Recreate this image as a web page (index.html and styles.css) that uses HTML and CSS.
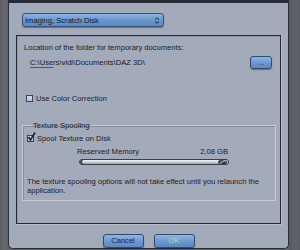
FILE: index.html
```html
<!DOCTYPE html>
<html lang="en">
<head>
  <meta charset="UTF-8" />
  <title>Preferences</title>
  <link rel="stylesheet" href="styles.css">
</head>
<body>
  <div class="screen">
    <div class="side side-left"></div>

    <div class="dialog">
      <div class="select">
        <span>Imaging, Scratch Disk</span>
        <svg class="chev" width="6" height="7" viewBox="0 0 6 7">
          <path d="M1 2.5 L3 0.8 L5 2.5 M1 4.5 L3 6.2 L5 4.5" fill="none" stroke="#1d2a44" stroke-width="1"/>
        </svg>
      </div>

      <div class="frame">
        <p class="label">Location of the folder for temporary documents:</p>
        <div class="path-row">
          <span class="path"><span class="typo">C:\Use</span>rs\vidi\Documents\DAZ 3D\</span>
          <button class="btn btn-small">...</button>
        </div>

        <label class="check-row check-top"><span class="box"></span>Use Color Correction</label>

        <fieldset class="group">
          <legend>Texture Spooling</legend>
          <label class="check-row"><span class="box">
            <svg width="9" height="10" viewBox="0 0 9 10">
              <path d="M1.5 5 L3.5 8 L8 0.5" fill="none" stroke="#18233d" stroke-width="1.6"/>
            </svg>
          </span>Spool Texture on Disk</label>

          <div class="memory">
            <div class="memory-labels">
              <span>Reserved Memory</span>
              <span>2,08 GB</span>
            </div>
            <div class="slider">
              <span class="knob">
                <svg width="8" height="4" viewBox="0 0 8 4">
                  <path d="M1 3.5 L5 0.8 L7 0.8" fill="none" stroke="#b9d3f0" stroke-width="1"/>
                </svg>
              </span>
            </div>
          </div>

          <p class="note">The texture spooling options will not take effect until you relaunch the application.</p>
        </fieldset>
      </div>

      <div class="actions">
        <button class="btn">Cancel</button>
        <button class="btn ok">OK</button>
      </div>
    </div>

    <div class="side side-right"></div>
  </div>
</body>
</html>
```

FILE: styles.css
```css
body {
  margin: 0;
  font-family: "Liberation Sans", Arial, sans-serif;
  font-size: 7.6px;
  line-height: 9px;
  color: #1a1d26;
  background: #5e6168;
}
.screen {
  display: flex;
  width: 300px;
  height: 250px;
  overflow: hidden;
}
.side {
  flex: none;
  height: 250px;
}
.side-left {
  width: 8px;
  background: linear-gradient(90deg, #5a5d64, #666970 60%, #5b5e65);
}
.side-right {
  width: 11px;
  background: linear-gradient(90deg, #575a62, #5f626a 50%, #595c63);
}
.dialog {
  flex: none;
  box-sizing: border-box;
  width: 281px;
  height: 249px;
  display: flex;
  flex-direction: column;
  padding: 0 7px;
  background: #a3aab9;
  border: 1px solid #2b303c;
  border-top: 3px solid #262b38;
  border-radius: 0 0 5px 5px;
}
.select {
  box-sizing: border-box;
  display: flex;
  align-items: center;
  justify-content: space-between;
  width: 142px;
  height: 14px;
  margin: 10px 0 0 6px;
  padding: 0 3px 0 2px;
  background: linear-gradient(#8db3e0, #6994ca 55%, #5c88c0);
  border: 1px solid #34527c;
  border-radius: 3px;
  box-shadow: 0 1px 1px rgba(20, 30, 50, 0.4);
  color: #141a28;
}
.frame {
  box-sizing: border-box;
  height: 189px;
  margin-top: 8px;
  padding-top: 7px;
  border: 1px solid #262a35;
  box-shadow: inset 1px 1px 0 #8f96a5, 1px 1px 0 #b9bfcb;
}
.label {
  margin: 0 0 0 7px;
}
.path-row {
  display: flex;
  align-items: center;
  height: 13px;
  margin-top: 4px;
}
.path {
  margin-left: 13px;
}
.typo {
  text-decoration: underline #d0202a;
  text-decoration-thickness: 1px;
  text-underline-offset: 2px;
}
.btn {
  box-sizing: border-box;
  width: 41px;
  height: 14px;
  padding: 0;
  font-family: inherit;
  font-size: 7.6px;
  line-height: 12px;
  color: #18213a;
  background: linear-gradient(#8fb6e2, #6c97cc 55%, #5d89c1);
  border: 1px solid #2e4b74;
  border-radius: 3px;
  box-shadow: 0 1px 1px rgba(20, 30, 50, 0.45);
}
.btn-small {
  width: 22px;
  height: 13px;
  margin: 0 8px 0 auto;
  line-height: 8px;
  color: #2a3c5c;
}
.check-row {
  display: flex;
  align-items: center;
  gap: 3px;
  height: 9px;
}
.check-top {
  margin: 25px 0 0 9px;
}
.box {
  position: relative;
  box-sizing: border-box;
  width: 7px;
  height: 7px;
  background: linear-gradient(#d5deec, #aebfd8);
  border: 1px solid #33445f;
}
.box svg {
  position: absolute;
  left: -1px;
  top: -4px;
}
.group {
  margin: 18px 4px 0 5px;
  padding: 0 4px 5px;
  min-inline-size: 0;
  border: 1px solid #c6cad4;
  box-shadow: inset 1px 1px 0 #878e9d;
}
.group legend {
  margin-left: 5px;
  padding: 0 1px;
  line-height: 9px;
}
.group .check-row {
  margin-top: 4px;
}
.memory {
  width: 152px;
  margin: 4px 0 0 50px;
}
.memory-labels {
  display: flex;
  justify-content: space-between;
  padding-right: 1px;
}
.slider {
  box-sizing: border-box;
  display: flex;
  align-items: center;
  justify-content: flex-end;
  width: 150px;
  height: 6px;
  margin: 3px 0 0 2px;
  background: linear-gradient(#f4f6f9, #d2d6dd 45%, #9aa0ab);
  border: 1px solid #3a3f4a;
  border-radius: 3px;
  box-shadow: inset 2px 0 0 #3a3f4a;
}
.knob {
  display: flex;
  align-items: center;
  justify-content: center;
  width: 9px;
  height: 4px;
  margin-right: 1px;
  background: linear-gradient(#4d5668, #283041);
  border-radius: 2px;
}
.note {
  margin: 12px 0 0;
}
.actions {
  display: flex;
  justify-content: center;
  gap: 10px;
  margin-top: 10px;
}
.ok {
  color: #a9dcb6;
}
```
